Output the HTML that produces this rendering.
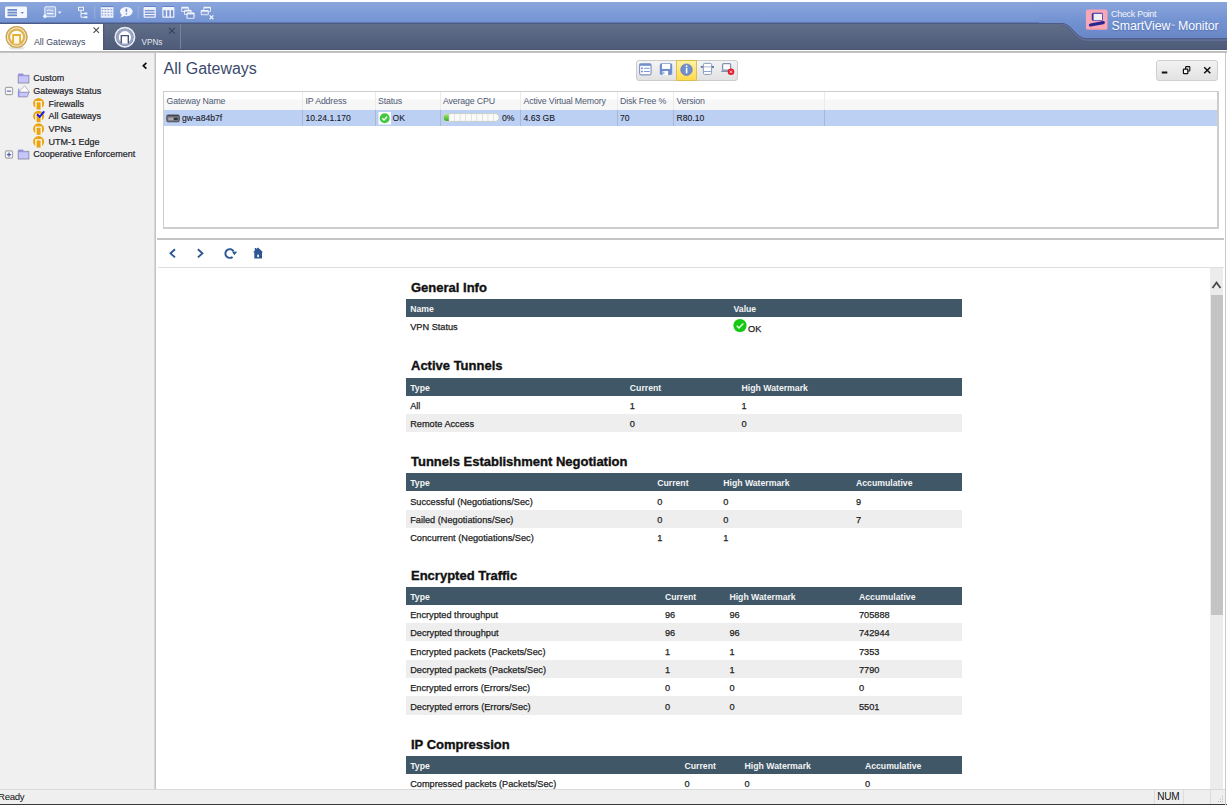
<!DOCTYPE html>
<html><head><meta charset="utf-8">
<style>
*{margin:0;padding:0;box-sizing:border-box}
html,body{width:1227px;height:806px;overflow:hidden;background:#fff;font-family:"Liberation Sans",sans-serif}
.a{position:absolute}
svg{position:absolute;overflow:visible}
#toolbar{left:0;top:2px;width:1227px;height:21px;background:linear-gradient(#8aa6dc,#7393d3);border-bottom:1px solid #5f78ae}
#tabbar{left:0;top:23px;width:1227px;height:27px;background:linear-gradient(#616e89,#4e5b79);border-top:1px solid #4c5b88;border-bottom:1px solid #48546e}
#tab1{left:0;top:24px;width:103px;height:26px;background:#fff}
#sep1{left:0;top:50px;width:1227px;height:3px;background:linear-gradient(#fff 0,#fff 33%,#b4b4b4 33%,#c8c8c8 100%)}
#sidebar{left:0;top:53px;width:157px;height:736px;background:linear-gradient(90deg,#f0f0f0 0,#f0f0f0 154px,#d6d6d6 154px,#d6d6d6 155px,#c4c4c4 155px,#c4c4c4 156px,#f6f6f6 156px)}
#content{left:156px;top:53px;width:1069px;height:736px;background:#fff}
#rborder{left:1224.5px;top:53px;width:1px;height:736px;background:#d2d2d2}
#status{left:0;top:789px;width:1226px;height:15px;background:#efefef;border-top:1px solid #dadada}
#botline{left:0;top:804px;width:1227px;height:1px;background:#383838}
.tree{font-size:9px;color:#1e1e2a;white-space:nowrap;line-height:10px;-webkit-text-stroke:0.2px #1e1e2a}
.th{font-size:8.8px;color:#4e5a74;white-space:nowrap;line-height:10px;letter-spacing:-0.15px}
.td{font-size:8.6px;color:#1a1a24;white-space:nowrap;line-height:10px;-webkit-text-stroke:0.1px #1a1a24}
.h2{font-size:13px;font-weight:bold;color:#111;white-space:nowrap;line-height:14px;-webkit-text-stroke:0.35px #111}
.tbl{left:405.5px;width:557px}
.hb{position:absolute;left:0;width:556.5px;height:18px;background:#3f5767}
.hbt{position:absolute;top:4px;font-size:8.7px;font-weight:bold;color:#f4f4f4;white-space:nowrap;line-height:10px}
.row{position:absolute;left:0;width:557px;height:18.3px}
.gr{background:#efefef}
.rt{position:absolute;top:4px;font-size:9.2px;color:#1e1e1e;white-space:nowrap;line-height:10px;-webkit-text-stroke:0.25px #1e1e1e}
</style></head><body>
<div id="toolbar" class="a"></div>
<div id="tabbar" class="a"></div>
<div id="tab1" class="a"></div>
<div id="sep1" class="a"></div>
<div id="sidebar" class="a"></div>
<div id="content" class="a"></div>
<div id="rborder" class="a"></div>
<div id="status" class="a"></div>
<div id="botline" class="a"></div>

<!-- toolbar icons -->
<svg style="left:0;top:0" width="230" height="23">
  <rect x="5" y="6.5" width="22" height="11.5" rx="1.5" fill="#f4f7fd"/>
  <rect x="7.5" y="9" width="9.5" height="1.8" fill="#6f8ccb"/>
  <rect x="7.5" y="11.7" width="9.5" height="1.8" fill="#6f8ccb"/>
  <rect x="7.5" y="14.4" width="9.5" height="1.8" fill="#6f8ccb"/>
  <path d="M20.5 12 L24 12 L22.25 14 Z" fill="#6f8ccb"/>
  <rect x="44.8" y="6.8" width="10.8" height="10" rx="1.2" fill="rgba(220,230,250,0.35)" stroke="#e6ecfa" stroke-width="1.1"/>
  <path d="M46.8 10.5 h1.2 l0.8 -1 l0.8 1.2 l0.8 -1 l0.8 1 h2" fill="none" stroke="#f4f7fd" stroke-width="0.9"/>
  <path d="M47 13.6 h6.5" stroke="#f4f7fd" stroke-width="1.2"/>
  <path d="M42.6 16.2 L44.9 14 L47.2 16.2 L44.9 18.4 Z" fill="#eef2fb"/>
  <path d="M57.8 11.6 L61.6 11.6 L59.7 13.8 Z" fill="#eef2fb"/>
  <rect x="78.5" y="7.3" width="5" height="3" fill="none" stroke="#eef2fb" stroke-width="1"/>
  <path d="M81 10.3 V17.2 H84.5 M81 13.5 H84.5" fill="none" stroke="#eef2fb" stroke-width="1"/>
  <rect x="84.2" y="12.5" width="3.2" height="2" fill="#eef2fb"/>
  <rect x="84.2" y="16.2" width="3.2" height="2" fill="#eef2fb"/>
  <rect x="94.4" y="6" width="0.8" height="13" fill="#9fb4e0"/>
  <rect x="100.8" y="6.3" width="12.6" height="0.9" fill="#5c76b8"/>
  <rect x="100.8" y="7.2" width="12.6" height="10.5" fill="#f2f5fc"/>
  <path d="M101.6 9.6 h11 M101.6 12.3 h11 M101.6 15 h11" stroke="#6f88c8" stroke-width="0.9" stroke-dasharray="1.8 1.2"/>
  <path d="M101.6 8.6 h11 M101.6 11.2 h11 M101.6 13.8 h11 M101.6 16.4 h11" stroke="#aebde6" stroke-width="0.5" stroke-dasharray="0.8 2"/>
  <ellipse cx="126.3" cy="11.6" rx="6.3" ry="4.7" fill="#f2f5fc"/>
  <path d="M122 14.5 L120.3 17.7 L125 15.8 Z" fill="#f2f5fc"/>
  <rect x="125.6" y="8.6" width="1.6" height="3.6" rx="0.6" fill="#7894d0"/>
  <rect x="125.7" y="13.3" width="1.4" height="1.4" fill="#7894d0"/>
  <rect x="137.7" y="6" width="0.8" height="13" fill="#9fb4e0"/>
  <rect x="143.6" y="6.3" width="12.2" height="0.8" fill="#5c76b8"/>
  <rect x="143.6" y="7.1" width="12.2" height="10.6" rx="0.8" fill="#f0f4fc"/>
  <rect x="144.8" y="9.9" width="9.8" height="1.5" fill="#7a94d2"/>
  <rect x="144.8" y="12.5" width="9.8" height="1.5" fill="#7a94d2"/>
  <rect x="144.8" y="15.1" width="9.8" height="1.5" fill="#7a94d2"/>
  <rect x="162.3" y="6.3" width="12.1" height="0.8" fill="#5c76b8"/>
  <rect x="162.3" y="7.1" width="12.1" height="10.6" rx="0.8" fill="#f0f4fc"/>
  <rect x="163.5" y="10.2" width="2.3" height="6.4" fill="#7a94d2"/>
  <rect x="167.2" y="10.2" width="2.3" height="6.4" fill="#7a94d2"/>
  <rect x="170.9" y="10.2" width="2.3" height="6.4" fill="#7a94d2"/>
  <g id="win"><rect x="181.3" y="6.8" width="7.5" height="5.2" rx="1" fill="#f0f4fc"/><rect x="182.2" y="8.6" width="5.7" height="2.6" fill="#7a94d2"/></g>
  <use href="#win" x="2.8" y="3"/>
  <use href="#win" x="5.5" y="6"/>
  <rect x="186.5" y="12.5" width="8" height="6.3" rx="1" fill="#f0f4fc"/><rect x="187.5" y="14.4" width="6" height="3.5" fill="#7a94d2"/>
  <rect x="203.4" y="6.8" width="7.6" height="5" rx="1" fill="#f0f4fc"/><rect x="204.3" y="8.4" width="5.8" height="2.5" fill="#7a94d2"/>
  <rect x="200.7" y="10" width="8" height="5.3" rx="1" fill="#f0f4fc"/><rect x="201.6" y="11.7" width="6.2" height="2.7" fill="#8ca2d8"/>
  <path d="M209.6 15.4 l3.8 3.8 M213.4 15.4 l-3.8 3.8" stroke="#f0f4fc" stroke-width="1.3"/>
</svg>

<!-- right logo region -->
<svg style="left:1040px;top:2px" width="187" height="48">
  <defs><linearGradient id="lg1" gradientUnits="userSpaceOnUse" x1="0" y1="0" x2="0" y2="36"><stop offset="0" stop-color="#8aa5dc"/><stop offset="0.58" stop-color="#7090d0"/><stop offset="1" stop-color="#6a88c8"/></linearGradient></defs>
  <path d="M-1 21 L21 21 C33 21 35 36.3 47 36.3 L187 36.3 L187 0 L-1 0 Z" fill="url(#lg1)"/>
  <path d="M-1 21.5 L21 21.5 C33 21.5 35 36.8 47 36.8 L187 36.8" fill="none" stroke="#4c5b88" stroke-width="1"/>
  <path d="M21 22.5 C32.5 22.5 34.5 38.1 47 38.1 L187 38.1" fill="none" stroke="#5f6f99" stroke-width="1.6"/>
  <path d="M21 24 C32 24 34 39.6 47 39.6 L187 39.6" fill="none" stroke="#4c5a78" stroke-width="0.8" opacity="0.7"/>
  <rect x="45.9" y="7.5" width="21.6" height="20.2" rx="2" fill="#f9a7b7"/>
  <rect x="45.9" y="26.7" width="21.6" height="1" fill="#e0909f" opacity="0.6"/>
  <rect x="51.8" y="10.8" width="11.2" height="8" rx="1.6" fill="#38329c"/>
  <rect x="53.6" y="11.8" width="8.6" height="6.4" fill="#f2eef6"/>
  <path d="M50.6 23 L63.2 20.6" stroke="#2a2690" stroke-width="3.3" stroke-linecap="round"/>
</svg>
<div class="a" style="left:1111px;top:9px;font-size:9px;color:#f2f4fb;letter-spacing:-0.3px;line-height:10px">Check Point</div>
<div class="a" style="left:1111.5px;top:18.5px;font-size:12.4px;color:#fafbff;line-height:14px;white-space:nowrap;letter-spacing:-0.1px;text-shadow:0 1px 1px rgba(40,60,120,0.35)">SmartView<span style="font-size:4px;vertical-align:top;margin-left:0.5px">™</span> Monitor</div>

<!-- tabs -->
<svg style="left:0;top:23px" width="200" height="27">
  <ellipse cx="16.6" cy="25" rx="8" ry="1.6" fill="#e2e2e2"/>
  <circle cx="16.6" cy="14" r="10.3" fill="#fff" stroke="#c9a24e" stroke-width="1.5"/>
  <circle cx="16.6" cy="14" r="9.2" fill="none" stroke="#efe2c4" stroke-width="0.7"/>
  <circle cx="16.6" cy="14" r="7.5" fill="#fff" stroke="#deb455" stroke-width="2.4"/>
  <path d="M13.1 20.6 V12 H20.1 V20.6" fill="#fff7e8" stroke="#e8b030" stroke-width="1.8"/>
  <circle cx="124.9" cy="14.2" r="9.6" fill="none" stroke="#e9ecf3" stroke-width="1.8"/>
  <circle cx="124.9" cy="14.2" r="7.3" fill="#fff" stroke="#97a5c9" stroke-width="2.4"/>
  <path d="M121.3 20.5 V12.6 H128.3 V20.5" fill="#fff" stroke="#4b5672" stroke-width="1.4"/>
  <path d="M93.5 4.3 L99 9.8 M99 4.3 L93.5 9.8" stroke="#4a4a4a" stroke-width="1.1"/>
  <path d="M169 4.8 L174.8 10.6 M174.8 4.8 L169 10.6" stroke="#3a4256" stroke-width="1.15"/>
  <rect x="180" y="1" width="1" height="25" fill="#76839b"/>
  <rect x="103" y="1" width="1.2" height="25.5" fill="#48546e" opacity="0.8"/>
</svg>
<div class="a" style="left:34px;top:37px;font-size:8.8px;color:#3a4766;line-height:10px;white-space:nowrap">All Gateways</div>
<div class="a" style="left:141.5px;top:37.5px;font-size:8.2px;color:#e4e8f2;line-height:10px;white-space:nowrap">VPNs</div>

<!-- sidebar tree -->
<svg style="left:0;top:53px" width="156" height="120">
  <path d="M146.4 9.9 L143.3 12.8 L146.4 15.7" stroke="#111" stroke-width="1.7" fill="none"/>
  <!-- custom folder -->
  <g id="fold">
    <rect x="18.2" y="20.6" width="5.2" height="2.2" fill="#8e8ee6"/>
    <rect x="18.2" y="22.3" width="10.7" height="7.7" fill="#c6c6fc" stroke="#80809c" stroke-width="0.8"/>
    <rect x="18.6" y="22.6" width="9.8" height="0.8" fill="#a8a8f0"/>
  </g>
  <!-- minus box -->
  <rect x="5.4" y="34.4" width="7.2" height="7.2" rx="1.3" fill="#f6f6f6" stroke="#a6a6a6" stroke-width="1.1"/>
  <rect x="6.9" y="37.6" width="4.2" height="1.1" fill="#5868c0"/>
  <!-- open folder -->
  <path d="M18.6 39.2 L24.6 32.8 L29.2 38.6 L27.5 40 Z" fill="#fcfcfc" stroke="#9a9aa8" stroke-width="0.7"/>
  <path d="M18.4 39.2 H29.2 L27.2 43.9 H18.4 Z" fill="#c6c6fc" stroke="#80809c" stroke-width="0.7"/>
  <rect x="18.1" y="35.6" width="1.2" height="8.3" fill="#8e8ee6"/>
  <!-- plus box -->
  <rect x="5.4" y="97.9" width="7.2" height="7.2" rx="1.3" fill="#f6f6f6" stroke="#a6a6a6" stroke-width="1.1"/>
  <rect x="6.9" y="101.1" width="4.2" height="1.1" fill="#4050b0"/>
  <rect x="8.45" y="99.5" width="1.1" height="4.2" fill="#4050b0"/>
  <!-- coop folder -->
  <use href="#fold" y="76"/>
  <g id="gw">
    <circle cx="38.6" cy="50.45" r="5.5" fill="#e9a416"/>
    <rect x="35.2" y="48.1" width="6.8" height="8.5" fill="#fff6e2"/>
    <rect x="35" y="55.6" width="7.2" height="1.5" fill="#f0f0f0"/>
    <rect x="36.6" y="49.3" width="4" height="7.2" fill="#e9a416"/>
  </g>
  <use href="#gw" y="12.7"/>
  <use href="#gw" y="25.4"/>
  <use href="#gw" y="38.1"/>
  <path d="M37 61.3 L39.7 63.8 L44.2 58.3" fill="none" stroke="#1a1ae6" stroke-width="2"/>
</svg>
<div class="a tree" style="left:33.2px;top:73.1px">Custom</div>
<div class="a tree" style="left:33.2px;top:85.8px">Gateways Status</div>
<div class="a tree" style="left:48.4px;top:98.5px">Firewalls</div>
<div class="a tree" style="left:48.4px;top:111.2px">All Gateways</div>
<div class="a tree" style="left:48.4px;top:123.9px">VPNs</div>
<div class="a tree" style="left:48.4px;top:136.6px">UTM-1 Edge</div>
<div class="a tree" style="left:33.2px;top:149.3px">Cooperative Enforcement</div>


<!-- content header -->

<div class="a" style="left:163.5px;top:58.5px;font-size:16px;color:#3b4a6b;line-height:20px;white-space:nowrap">All Gateways</div>
<!-- mid toolbar -->
<div class="a" style="left:635.5px;top:60px;width:102px;height:21px;border:1px solid #cbcbcb;border-radius:3px;background:linear-gradient(#f4f4f4,#e2e2e2)"></div>
<div class="a" style="left:676px;top:60px;width:21px;height:21px;border:1px solid #dcc04a;background:linear-gradient(#fff2a6,#ffd84c)"></div>
<svg style="left:630px;top:56px" width="115" height="28">
  <rect x="9.6" y="7.8" width="11.5" height="11.1" rx="1.6" fill="#fff" stroke="#7d92c4" stroke-width="1.1"/>
  <rect x="9.6" y="7.8" width="11.5" height="2" fill="#7090cc"/>
  <circle cx="11.9" cy="12.3" r="0.95" fill="#7090cc"/><circle cx="11.9" cy="15.5" r="0.95" fill="#7090cc"/>
  <path d="M13.8 12.3 h6 M13.8 15.5 h6" stroke="#7090cc" stroke-width="0.9"/>
  <rect x="29.8" y="7.3" width="12.4" height="11.8" rx="1.8" fill="#6f8ecb"/>
  <rect x="32" y="7.9" width="8.2" height="5" fill="#fff"/>
  <rect x="32.6" y="15" width="5.5" height="4.1" fill="#fff"/>
  <rect x="33.4" y="15.6" width="0.9" height="2.6" fill="#6f8ecb"/>
  <circle cx="56.5" cy="13.7" r="5.8" fill="#6f8ecb" stroke="#5674b4" stroke-width="0.6"/>
  <rect x="55.8" y="12" width="1.6" height="5.3" fill="#fff"/>
  <circle cx="56.6" cy="10.3" r="0.95" fill="#fff"/>
  <rect x="73.4" y="7.4" width="8.2" height="11" rx="1.2" fill="#fff" stroke="#8a9ac0" stroke-width="1"/>
  <path d="M71 10.9 H83.8" stroke="#8a9ac0" stroke-width="0.7"/>
  <rect x="70.8" y="10.2" width="2" height="1.5" fill="#50608a"/><rect x="82" y="10.2" width="2" height="1.5" fill="#50608a"/>
  <path d="M74 15.5 H81" stroke="#7090cc" stroke-width="0.8"/>
  <rect x="92.6" y="7.6" width="8" height="6.6" rx="1" fill="#fff" stroke="#8492b0" stroke-width="1.3"/>
  <rect x="91.2" y="14.6" width="8" height="1.4" fill="#8492b0"/>
  <circle cx="101" cy="15.8" r="3.3" fill="#e01e2c"/>
  <path d="M99.8 14.6 l2.4 2.4 M102.2 14.6 l-2.4 2.4" stroke="#ffd0d4" stroke-width="0.9"/>
</svg>
<!-- window controls -->
<div class="a" style="left:1156px;top:60px;width:61.5px;height:20.5px;border:1px solid #cfcfcf;border-radius:3px;background:linear-gradient(#f2f2f2,#e2e2e2)"></div>
<svg style="left:1156px;top:60px" width="62" height="21">
  <rect x="5.8" y="11.5" width="5.5" height="2" fill="#111"/>
  <rect x="29.6" y="6.6" width="4.2" height="4.4" rx="0.6" fill="none" stroke="#111" stroke-width="1.1"/>
  <rect x="27.4" y="9.1" width="4.4" height="4.5" rx="0.6" fill="#f4f4f4" stroke="#111" stroke-width="1.2"/>
  <path d="M48.2 7.2 L54.3 13.2 M54.3 7.2 L48.2 13.2" stroke="#111" stroke-width="1.5"/>
</svg>
<!-- gateway list table -->
<div class="a" style="left:163px;top:91px;width:1056px;height:138px;border:1px solid #cdcdcd;border-right-width:2px;border-bottom-width:2px;background:#fff"></div>
<div class="a" style="left:164px;top:92px;width:1053px;height:18px;background:linear-gradient(#ffffff 0,#ffffff 38%,#f7f7f7 45%,#f7f7f7 100%)"></div>
<div class="a" style="left:164px;top:110px;width:1053px;height:16px;background:#bcd0f4"></div>
<div class="a" style="left:302px;top:92px;width:1px;height:18px;background:#ebebeb"></div><div class="a" style="left:302px;top:110px;width:1px;height:16px;background:#aab6d2"></div>
<div class="a" style="left:374.5px;top:92px;width:1px;height:18px;background:#ebebeb"></div><div class="a" style="left:374.5px;top:110px;width:1px;height:16px;background:#aab6d2"></div>
<div class="a" style="left:439.5px;top:92px;width:1px;height:18px;background:#ebebeb"></div><div class="a" style="left:439.5px;top:110px;width:1px;height:16px;background:#aab6d2"></div>
<div class="a" style="left:519.5px;top:92px;width:1px;height:18px;background:#ebebeb"></div><div class="a" style="left:519.5px;top:110px;width:1px;height:16px;background:#aab6d2"></div>
<div class="a" style="left:616.5px;top:92px;width:1px;height:18px;background:#ebebeb"></div><div class="a" style="left:616.5px;top:110px;width:1px;height:16px;background:#aab6d2"></div>
<div class="a" style="left:673px;top:92px;width:1px;height:18px;background:#ebebeb"></div><div class="a" style="left:673px;top:110px;width:1px;height:16px;background:#aab6d2"></div>
<div class="a" style="left:823.5px;top:92px;width:1px;height:18px;background:#ebebeb"></div><div class="a" style="left:823.5px;top:110px;width:1px;height:16px;background:#aab6d2"></div>
<div class="a th" style="left:166.5px;top:96px">Gateway Name</div>
<div class="a th" style="left:305.5px;top:96px">IP Address</div>
<div class="a th" style="left:378px;top:96px">Status</div>
<div class="a th" style="left:443px;top:96px">Average CPU</div>
<div class="a th" style="left:523.5px;top:96px">Active Virtual Memory</div>
<div class="a th" style="left:620px;top:96px">Disk Free %</div>
<div class="a th" style="left:676.5px;top:96px">Version</div>
<svg style="left:164px;top:110px" width="400" height="16">
  <rect x="2.8" y="5" width="12.5" height="6.8" rx="1.2" fill="#77777f" stroke="#44444c" stroke-width="0.9"/>
  <rect x="3.5" y="5" width="11" height="1.2" fill="#44444c"/>
  <rect x="4.3" y="7.6" width="5" height="2.6" fill="#a9a9b2"/>
  <rect x="10" y="7.8" width="3.6" height="2.2" fill="#333338"/>
  <rect x="214.5" y="2" width="12.5" height="12.5" fill="#fff"/>
  <circle cx="220.7" cy="8.2" r="5" fill="#44c844"/>
  <path d="M218.3 8.3 l1.7 1.8 l3 -3.3" fill="none" stroke="#fff" stroke-width="1.3"/>
  <rect x="279.4" y="3.6" width="55.8" height="7.8" rx="3.9" fill="#fbfbfb" stroke="#c2c8bc" stroke-width="0.8"/>
  <defs><linearGradient id="gg" x1="0" y1="0" x2="0" y2="1"><stop offset="0" stop-color="#a6ea78"/><stop offset="1" stop-color="#3aa81c"/></linearGradient></defs><path d="M285 4 h-1.9 a3.5 3.5 0 0 0 0 7 h1.9 z" fill="url(#gg)"/>
  <g fill="#d4dad0"><rect x="284.70" y="4.1" width="0.7" height="6.8"/><rect x="290.25" y="4.1" width="0.7" height="6.8"/><rect x="295.80" y="4.1" width="0.7" height="6.8"/><rect x="301.35" y="4.1" width="0.7" height="6.8"/><rect x="306.90" y="4.1" width="0.7" height="6.8"/><rect x="312.45" y="4.1" width="0.7" height="6.8"/><rect x="318.00" y="4.1" width="0.7" height="6.8"/><rect x="323.55" y="4.1" width="0.7" height="6.8"/><rect x="329.10" y="4.1" width="0.7" height="6.8"/></g>
</svg>
<div class="a td" style="left:182px;top:112.5px">gw-a84b7f</div>
<div class="a td" style="left:305.5px;top:112.5px">10.24.1.170</div>
<div class="a td" style="left:392.5px;top:112.5px">OK</div>
<div class="a td" style="left:502px;top:112.5px">0%</div>
<div class="a td" style="left:523.5px;top:112.5px">4.63 GB</div>
<div class="a td" style="left:620px;top:112.5px">70</div>
<div class="a td" style="left:676.5px;top:112.5px">R80.10</div>
<!-- splitter -->
<div class="a" style="left:157px;top:237.5px;width:1067px;height:2px;background:#c4c4c4"></div>
<svg style="left:156px;top:240px" width="120" height="26">
  <path d="M19 9.3 L14.5 13.35 L19 17.4" fill="none" stroke="#2c5794" stroke-width="1.9"/>
  <path d="M41.9 9.3 L46.4 13.35 L41.9 17.4" fill="none" stroke="#2c5794" stroke-width="1.9"/>
  <path d="M77.6 11.3 A4.4 4.4 0 1 0 76.6 16.9" fill="none" stroke="#2c5794" stroke-width="1.9"/>
  <path d="M76 11.4 L81.2 11.7 L78.3 15.2 Z" fill="#2c5794"/>
  <path d="M102 7.6 L107 12.3 H106 V18.4 H98.3 V12.3 H97 Z" fill="#2c5794"/>
  <rect x="98.8" y="8" width="1.6" height="3.5" fill="#2c5794"/>
  <rect x="101.3" y="14.6" width="1.6" height="2.6" fill="#fff"/>
</svg>
<div class="a" style="left:158px;top:266.5px;width:1066px;height:1.5px;background:#dedede"></div>
<!-- scrollbar -->
<div class="a" style="left:1210px;top:268px;width:13px;height:521px;background:#ececec"></div>
<div class="a" style="left:1210.5px;top:294.5px;width:12px;height:320.5px;background:#c4c4c4"></div>
<svg style="left:1210px;top:268px" width="13" height="26">
  <path d="M12.5 20 L16.5 14.5 L20.5 20" transform="translate(-10,0)" fill="none" stroke="#4a4a4a" stroke-width="1.8"/>
</svg>

<!-- report -->
<div class="a h2" style="left:411px;top:280.8px">General Info</div>
<div class="a" style="left:405.5px;top:298.5px;width:556.5px;height:18px;background:#3f5767"></div>
<div class="a hbt" style="left:410.2px;top:303.5px">Name</div>
<div class="a hbt" style="left:733.5px;top:303.5px">Value</div>
<div class="a rt" style="left:410.2px;top:321.8px">VPN Status</div>
<svg style="left:733px;top:318px" width="20" height="16"><circle cx="7" cy="7.5" r="6.6" fill="#14c814"/><path d="M3.7 7.8 l2.3 2.2 l4.3 -4.6" fill="none" stroke="#e8ffe8" stroke-width="1.5"/></svg>
<div class="a rt" style="left:748px;top:324.3px">OK</div>
<div class="a h2" style="left:411px;top:359.4px">Active Tunnels</div>
<div class="a" style="left:405.5px;top:377.6px;width:556.5px;height:18px;background:#3f5767"></div>
<div class="a hbt" style="left:410.2px;top:382.6px">Type</div>
<div class="a hbt" style="left:629.8px;top:382.6px">Current</div>
<div class="a hbt" style="left:741.6px;top:382.6px">High Watermark</div>
<div class="a rt" style="left:410.2px;top:400.9px">All</div>
<div class="a rt" style="left:629.8px;top:400.9px">1</div>
<div class="a rt" style="left:741.6px;top:400.9px">1</div>
<div class="a" style="left:405.5px;top:413.9px;width:556.5px;height:18.3px;background:#eeeeee"></div>
<div class="a rt" style="left:410.2px;top:419.2px">Remote Access</div>
<div class="a rt" style="left:629.8px;top:419.2px">0</div>
<div class="a rt" style="left:741.6px;top:419.2px">0</div>
<div class="a h2" style="left:411px;top:454.8px">Tunnels Establishment Negotiation</div>
<div class="a" style="left:405.5px;top:473.2px;width:556.5px;height:18px;background:#3f5767"></div>
<div class="a hbt" style="left:410.2px;top:478.2px">Type</div>
<div class="a hbt" style="left:657.2px;top:478.2px">Current</div>
<div class="a hbt" style="left:723.2px;top:478.2px">High Watermark</div>
<div class="a hbt" style="left:856.0px;top:478.2px">Accumulative</div>
<div class="a rt" style="left:410.2px;top:496.5px">Successful (Negotiations/Sec)</div>
<div class="a rt" style="left:657.2px;top:496.5px">0</div>
<div class="a rt" style="left:723.2px;top:496.5px">0</div>
<div class="a rt" style="left:856.0px;top:496.5px">9</div>
<div class="a" style="left:405.5px;top:509.5px;width:556.5px;height:18.3px;background:#eeeeee"></div>
<div class="a rt" style="left:410.2px;top:514.8px">Failed (Negotiations/Sec)</div>
<div class="a rt" style="left:657.2px;top:514.8px">0</div>
<div class="a rt" style="left:723.2px;top:514.8px">0</div>
<div class="a rt" style="left:856.0px;top:514.8px">7</div>
<div class="a rt" style="left:410.2px;top:533.1px">Concurrent (Negotiations/Sec)</div>
<div class="a rt" style="left:657.2px;top:533.1px">1</div>
<div class="a rt" style="left:723.2px;top:533.1px">1</div>
<div class="a h2" style="left:411px;top:568.6px">Encrypted Traffic</div>
<div class="a" style="left:405.5px;top:586.8px;width:556.5px;height:18px;background:#3f5767"></div>
<div class="a hbt" style="left:410.2px;top:591.8px">Type</div>
<div class="a hbt" style="left:664.9px;top:591.8px">Current</div>
<div class="a hbt" style="left:729.4px;top:591.8px">High Watermark</div>
<div class="a hbt" style="left:859.0px;top:591.8px">Accumulative</div>
<div class="a rt" style="left:410.2px;top:610.1px">Encrypted throughput</div>
<div class="a rt" style="left:664.9px;top:610.1px">96</div>
<div class="a rt" style="left:729.4px;top:610.1px">96</div>
<div class="a rt" style="left:859.0px;top:610.1px">705888</div>
<div class="a" style="left:405.5px;top:623.1px;width:556.5px;height:18.3px;background:#eeeeee"></div>
<div class="a rt" style="left:410.2px;top:628.4px">Decrypted throughput</div>
<div class="a rt" style="left:664.9px;top:628.4px">96</div>
<div class="a rt" style="left:729.4px;top:628.4px">96</div>
<div class="a rt" style="left:859.0px;top:628.4px">742944</div>
<div class="a rt" style="left:410.2px;top:646.7px">Encrypted packets (Packets/Sec)</div>
<div class="a rt" style="left:664.9px;top:646.7px">1</div>
<div class="a rt" style="left:729.4px;top:646.7px">1</div>
<div class="a rt" style="left:859.0px;top:646.7px">7353</div>
<div class="a" style="left:405.5px;top:659.7px;width:556.5px;height:18.3px;background:#eeeeee"></div>
<div class="a rt" style="left:410.2px;top:665.0px">Decrypted packets (Packets/Sec)</div>
<div class="a rt" style="left:664.9px;top:665.0px">1</div>
<div class="a rt" style="left:729.4px;top:665.0px">1</div>
<div class="a rt" style="left:859.0px;top:665.0px">7790</div>
<div class="a rt" style="left:410.2px;top:683.3px">Encrypted errors (Errors/Sec)</div>
<div class="a rt" style="left:664.9px;top:683.3px">0</div>
<div class="a rt" style="left:729.4px;top:683.3px">0</div>
<div class="a rt" style="left:859.0px;top:683.3px">0</div>
<div class="a" style="left:405.5px;top:696.3px;width:556.5px;height:18.3px;background:#eeeeee"></div>
<div class="a rt" style="left:410.2px;top:701.6px">Decrypted errors (Errors/Sec)</div>
<div class="a rt" style="left:664.9px;top:701.6px">0</div>
<div class="a rt" style="left:729.4px;top:701.6px">0</div>
<div class="a rt" style="left:859.0px;top:701.6px">5501</div>
<div class="a h2" style="left:411px;top:738.0px">IP Compression</div>
<div class="a" style="left:405.5px;top:755.8px;width:556.5px;height:18px;background:#3f5767"></div>
<div class="a hbt" style="left:410.2px;top:760.8px">Type</div>
<div class="a hbt" style="left:684.5px;top:760.8px">Current</div>
<div class="a hbt" style="left:744.6px;top:760.8px">High Watermark</div>
<div class="a hbt" style="left:864.9px;top:760.8px">Accumulative</div>
<div class="a rt" style="left:410.2px;top:779.1px">Compressed packets (Packets/Sec)</div>
<div class="a rt" style="left:684.5px;top:779.1px">0</div>
<div class="a rt" style="left:744.6px;top:779.1px">0</div>
<div class="a rt" style="left:864.9px;top:779.1px">0</div>
<!-- status bar (on top) -->
<div class="a" style="left:0;top:789px;width:1226px;height:15px;background:#efefef;border-top:1px solid #dadada"></div>
<div class="a" style="left:-2px;top:792.3px;font-size:9.6px;color:#111;line-height:10px;letter-spacing:-0.3px">Ready</div>
<div class="a" style="left:1153.5px;top:790px;width:1px;height:14px;background:#dcdcdc"></div>
<div class="a" style="left:1182.5px;top:790px;width:1px;height:14px;background:#dcdcdc"></div>
<div class="a" style="left:1210px;top:790px;width:1px;height:14px;background:#dcdcdc"></div>
<div class="a" style="left:1157.2px;top:791.6px;font-size:10px;color:#111;line-height:10px;letter-spacing:-0.2px">NUM</div>
<svg style="left:1212px;top:790px" width="14" height="14"><g fill="#b8b8b8"><rect x="10" y="6" width="1" height="1"/><rect x="8" y="8.5" width="1" height="1"/><rect x="10" y="8.5" width="1" height="1"/><rect x="6" y="11" width="1" height="1"/><rect x="8" y="11" width="1" height="1"/><rect x="10" y="11" width="1" height="1"/></g></svg>
<div class="a" style="left:0;top:804px;width:1226px;height:1px;background:#383838"></div>
<div class="a" style="left:1225px;top:53px;width:1px;height:752px;background:#c8c8c8"></div>

</body></html>
